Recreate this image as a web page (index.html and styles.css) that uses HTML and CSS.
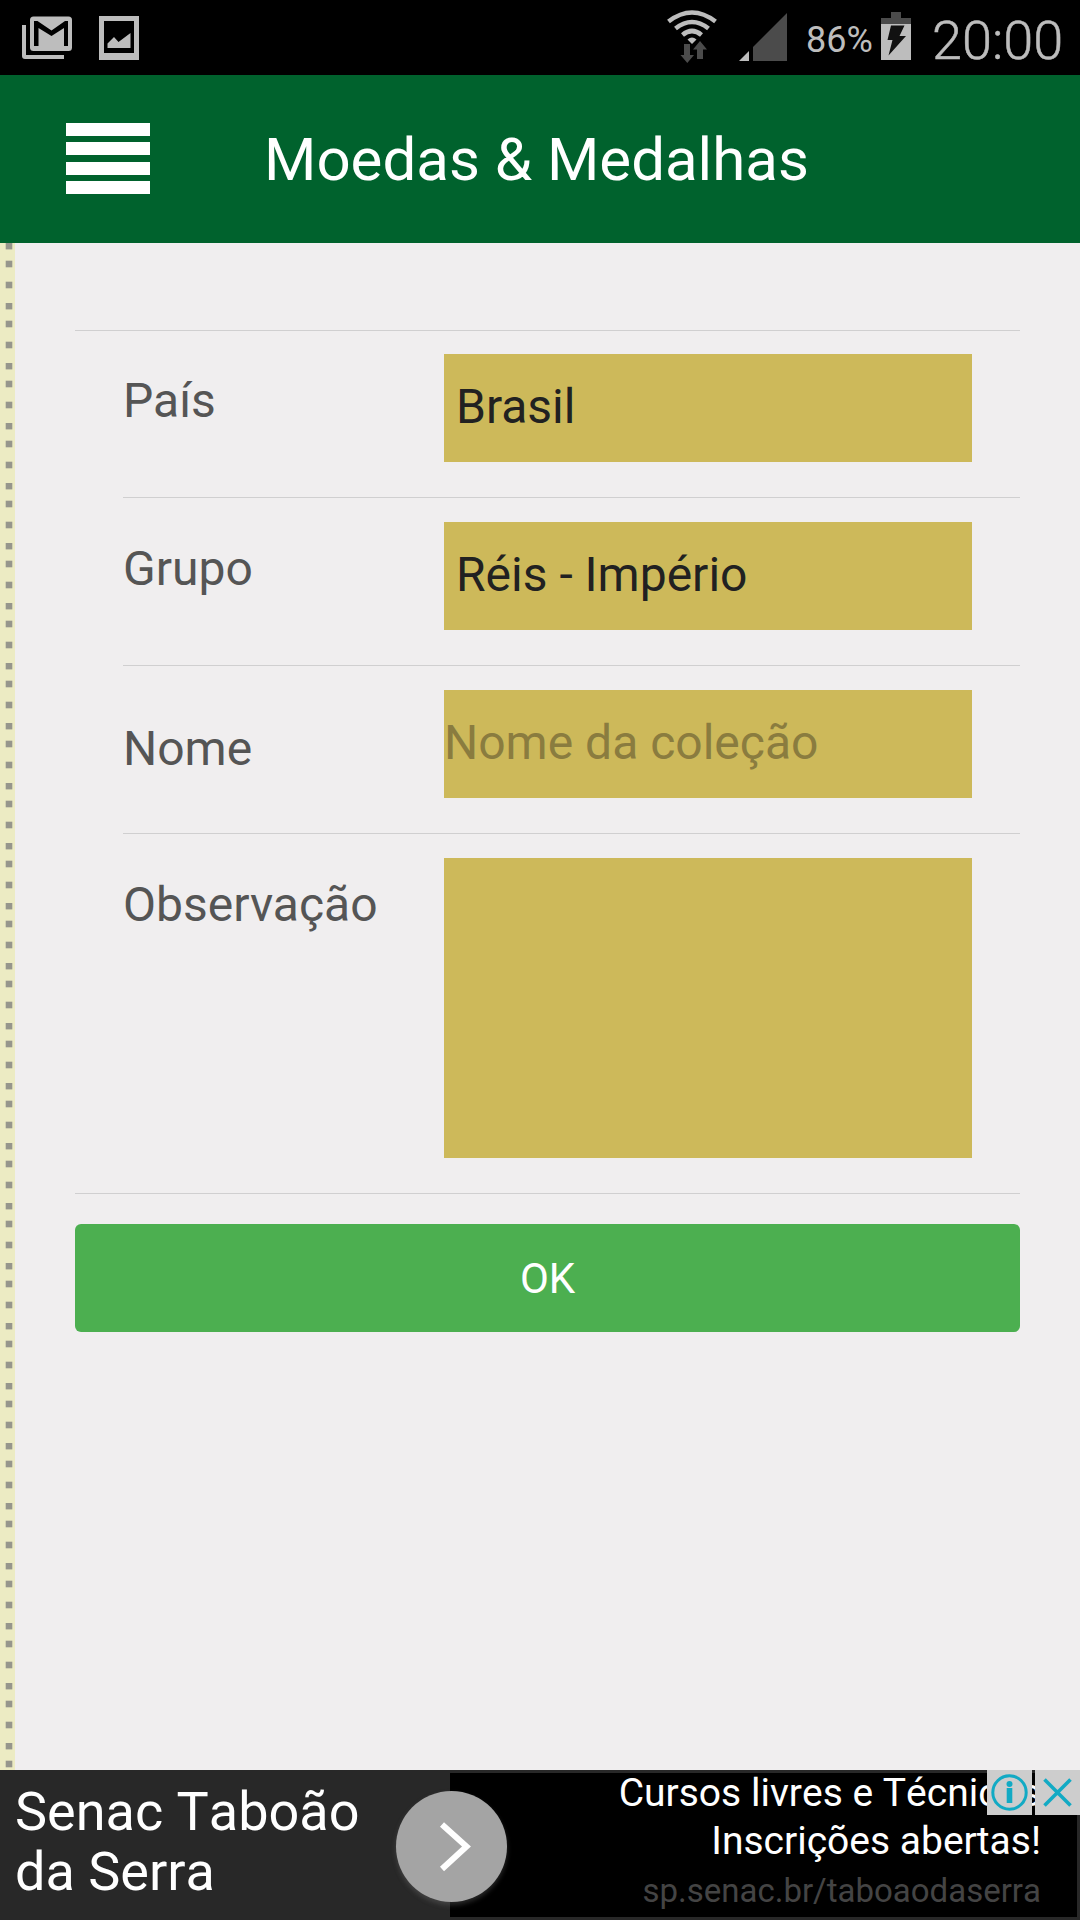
FILE: index.html
```html
<!DOCTYPE html>
<html lang="pt-BR">

<head>
    <meta charset="utf-8">
    <title>Moedas &amp; Medalhas</title>
    <link rel="stylesheet" href="styles.css">
</head>

<body>
    <div class="status-bar">
        <svg class="status-left" width="160" height="75" viewBox="0 0 160 75">
            <path d="M22 25h4v30h38v4H25q-3 0-3-3z" fill="#bdbdbd"/>
            <rect x="30" y="16.500" width="42" height="34.500" rx="3.500" fill="#bdbdbd"/>
            <path d="M34 46V21h3.500L51.500 30.500 65 21h3v25h-4V28L51.500 36 38.500 28v18z" fill="#000"/>
            <path d="M99 16h40v44H99zM104 21v32h30V21z" fill="#bdbdbd" fill-rule="evenodd"/>
            <path d="M107.500 48v-4.500l6.500-6.500 4.500 5L130.500 33v15z" fill="#bdbdbd"/>
        </svg>
        <svg class="status-signal" width="141" height="75" viewBox="0 0 141 75">
            <g fill="none" stroke="#bdbdbd" stroke-width="4.600">
                <path d="M8.500 21.500q23.500-18 47 0"/>
                <path d="M15.500 28.500q16.500-13 33 0"/>
                <path d="M22.500 35q9.500-8 19 0"/>
            </g>
            <path d="M27.500 39.500q4.500-4 9 0L32 44z" fill="#bdbdbd"/>
            <path d="M24 44h6v11h4l-6.700 8L20.500 55H24z" fill="#4b4b4b"/>
            <path d="M40 41l7 8.500h-4V59h-6V49.500h-4z" fill="#4b4b4b"/>
            <path d="M79 61l10-10v10z" fill="#bdbdbd"/>
            <path d="M93 61V47l34-34v48z" fill="#4b4b4b"/>
        </svg>
        <span class="battery-text">86%</span>
        <svg class="battery" width="30" height="60" viewBox="0 0 30 60">
            <path d="M10 12h10v6h10v6H0v-6h10z" fill="#4b4b4b"/>
            <path d="M0 24h30v36H0z" fill="#bdbdbd"/>
            <path d="M10 25.500h13.500L18.500 36H25L7.500 55.500l4-15.500H6.500z" fill="#111"/>
        </svg>
        <span class="clock">20:00</span>
    </div>

    <div class="header">
        <div class="menu-button">
            <span></span>
            <span></span>
            <span></span>
            <span></span>
        </div>
        <h1>Moedas &amp; Medalhas</h1>
    </div>

    <div class="content">
        <svg class="stitch" width="15" height="1527">
            <defs>
                <pattern id="dots" width="15" height="60" patternUnits="userSpaceOnUse">
                    <rect width="15" height="60" fill="#ecebc3"/>
                    <g fill="#96968c">
                        <rect x="5.700" y="0" width="6.600" height="6.400"/>
                        <rect x="5.700" y="17.700" width="6.600" height="6.600"/>
                        <rect x="5.700" y="38.700" width="6.600" height="6.600"/>
                    </g>
                </pattern>
            </defs>
            <rect width="15" height="1527" fill="url(#dots)"/>
        </svg>
        <form class="form">
            <div class="list">
                <div class="row">
                    <label for="pais">País</label>
                    <input id="pais" class="field select" type="text" value="Brasil" readonly>
                </div>
                <div class="row">
                    <label for="grupo">Grupo</label>
                    <input id="grupo" class="field select" type="text" value="Réis - Império" readonly>
                </div>
                <div class="row">
                    <label class="label-low" for="nome">Nome</label>
                    <input id="nome" class="field" type="text" placeholder="Nome da coleção">
                </div>
                <div class="row">
                    <label for="obs">Observação</label>
                    <textarea id="obs" class="field area"></textarea>
                </div>
            </div>
            <button class="ok-button" type="button">OK</button>
        </form>
    </div>

    <div class="ad">
        <div class="ad-title">Senac Taboão<br>da Serra</div>
        <div class="ad-body">
            <div class="ad-text">Cursos livres e Técnicos<br>Inscrições abertas!</div>
            <div class="ad-url">sp.senac.br/taboaodaserra</div>
        </div>
        <div class="ad-arrow">
            <svg width="111" height="111" viewBox="0 0 111 111">
                <path d="M46 33.500L70.500 55.500 46 78" fill="none" stroke="#fff" stroke-width="6"/>
            </svg>
        </div>
        <div class="ad-controls">
            <svg width="45" height="45" viewBox="0 0 45 45">
                <rect width="45" height="45" fill="#cdcdcd"/>
                <circle cx="22.500" cy="22.500" r="16.700" fill="none" stroke="#12aac4" stroke-width="3"/>
                <circle cx="22.500" cy="14" r="3" fill="#12aac4"/>
                <path d="M19.700 18h5.600v15h-5.600z" fill="#12aac4"/>
            </svg>
            <svg width="45" height="45" viewBox="0 0 45 45">
                <rect width="45" height="45" fill="#cdcdcd"/>
                <path d="M9.500 9.500l26 26M35.500 9.500l-26 26" stroke="#12aac4" stroke-width="3.600"/>
            </svg>
        </div>
    </div>
</body>

</html>
```

FILE: styles.css
```css
* {
    box-sizing: border-box;
}

body {
    margin: 0;
    height: 1920px;
    display: flex;
    flex-direction: column;
    overflow: hidden;
    background-color: #f0eeef;
    font-family: Roboto, sans-serif;
}

svg {
    display: block;
}

.status-bar {
    display: flex;
    align-items: flex-start;
    height: 75px;
    background-color: #000;
    color: #bdbdbd;
}

.status-signal {
    margin-left: 500px;
}

.battery-text {
    width: 80px;
    padding-left: 5px;
    font-size: 36px;
    line-height: 80px;
    height: 75px;
}

.clock {
    margin-left: 21px;
    font-size: 54px;
    line-height: 82px;
    height: 75px;
    font-weight: 300;
    -webkit-text-stroke: 0.5px #bdbdbd;
}

.header {
    display: flex;
    height: 168px;
    background-color: #00622d;
}

.menu-button {
    display: flex;
    flex-direction: column;
    justify-content: space-between;
    width: 84px;
    height: 71px;
    margin: 48px 0 0 66px;
}

.menu-button span {
    height: 13px;
    background-color: #fff;
}

h1 {
    margin: 0 0 0 114px;
    color: #fff;
    font-size: 60px;
    font-weight: 400;
    line-height: 170px;
}

.content {
    display: flex;
    height: 1527px;
}

.form {
    width: 945px;
    margin: 87px 0 0 60px;
}

.list {
    border-top: 1px solid #d0cfd0;
    border-bottom: 1px solid #d0cfd0;
}

.row {
    display: flex;
    align-items: flex-start;
    margin-left: 48px;
    padding: 24px 48px 35px 0;
    border-bottom: 1px solid #d0cfd0;
}

.row:first-child {
    padding-top: 23px;
}

.row:last-child {
    border-bottom: none;
}

label {
    width: 321px;
    color: #555;
    font-size: 48px;
    line-height: 94px;
}

.label-low {
    padding-top: 12px;
}

.row > label {
    height: 108px;
}

.field {
    width: 528px;
    height: 108px;
    margin: 0;
    padding: 0 0 3px;
    border: none;
    border-radius: 0;
    outline: none;
    background-color: #cdb95a;
    color: #212121;
    font-family: inherit;
    font-size: 48px;
}

.field::placeholder {
    color: #8a7c3f;
    opacity: 1;
}

.select {
    padding-left: 12px;
}

.area {
    height: 300px;
    resize: none;
}

.ok-button {
    display: block;
    width: 945px;
    height: 108px;
    margin-top: 30px;
    padding: 0;
    border: none;
    border-radius: 6px;
    background-color: #4caf50;
    color: #fff;
    font-family: inherit;
    font-size: 42px;
}

.ad {
    position: relative;
    display: flex;
    height: 150px;
    background-color: #282828;
    color: #fff;
    font-kerning: none;
}

.ad-title {
    width: 450px;
    padding: 12px 0 0 15px;
    font-size: 54px;
    line-height: 60px;
}

.ad-body {
    width: 627px;
    height: 144px;
    margin-top: 3px;
    padding-right: 36px;
    background-color: #000;
    text-align: right;
}

.ad-text {
    margin-top: -4px;
    font-size: 39px;
    line-height: 48px;
}

.ad-url {
    color: #444;
    font-size: 33px;
    line-height: 51px;
}

/* round arrow sits over the edge between the two ad halves */
.ad-arrow {
    position: absolute;
    left: 396px;
    top: 21px;
    width: 111px;
    height: 111px;
    border-radius: 50%;
    background-color: #a4a4a4;
    box-shadow: 0 3px 5px rgba(120, 120, 120, 0.35);
}

.ad-controls {
    position: absolute;
    top: 0;
    right: 0;
    display: flex;
    gap: 3px;
}
```
